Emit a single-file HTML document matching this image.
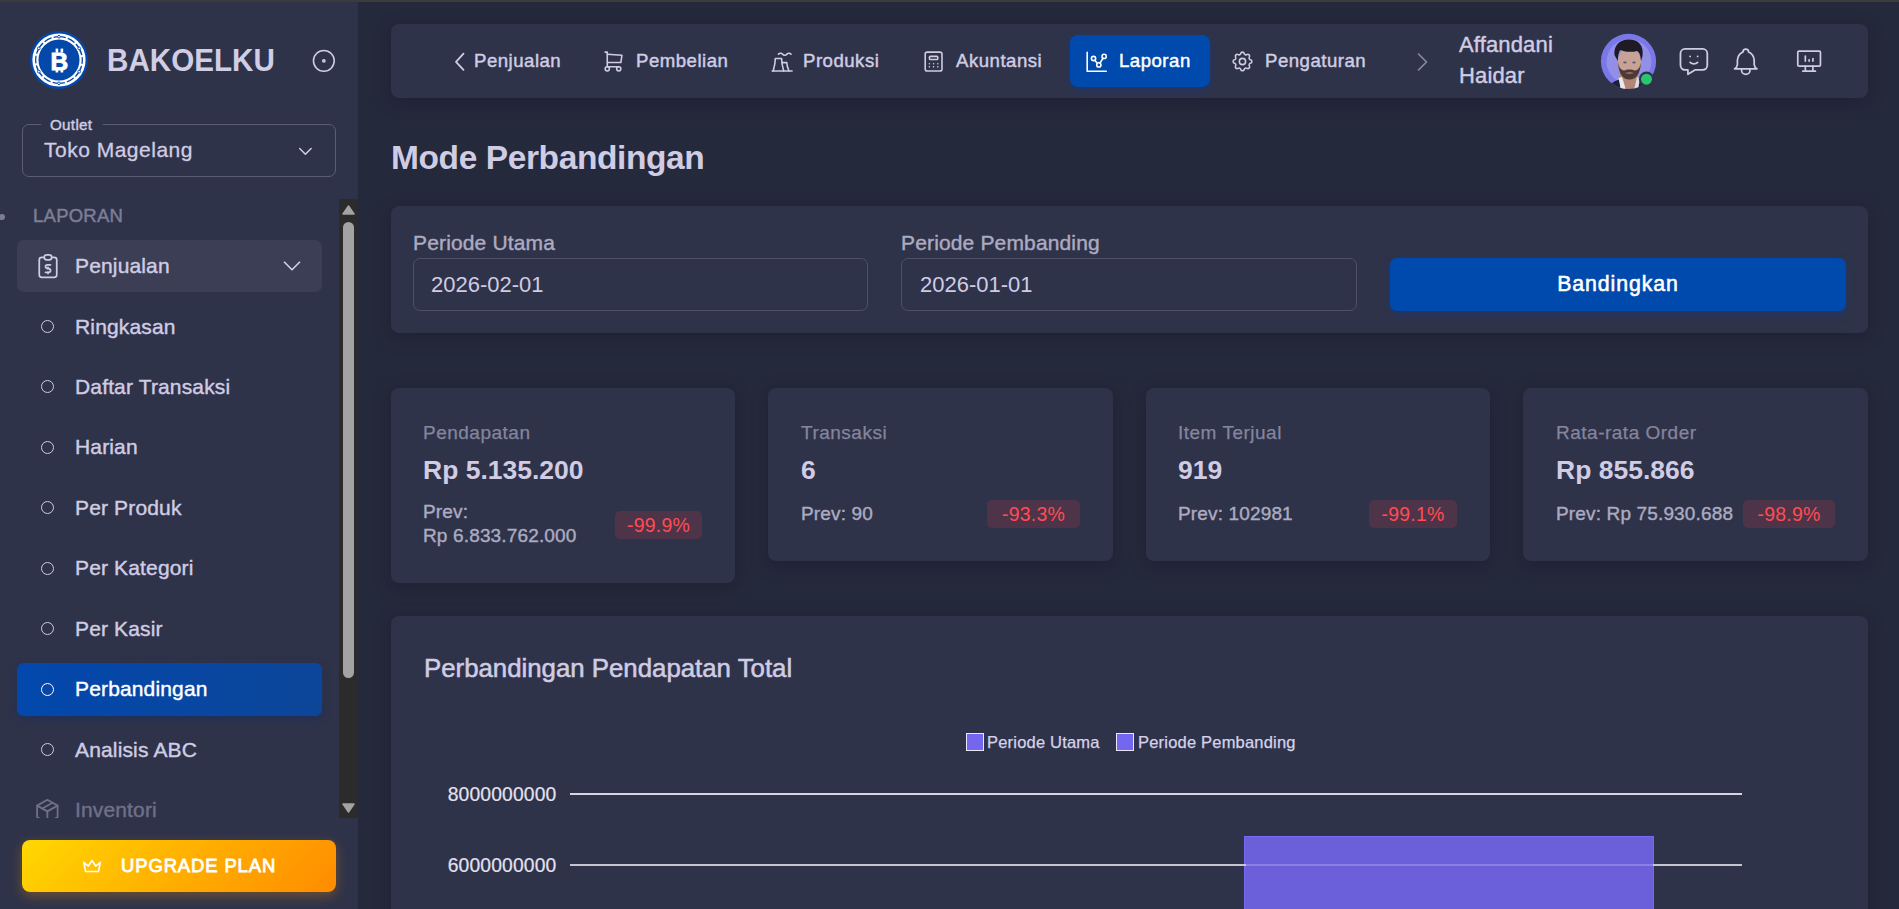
<!DOCTYPE html>
<html><head><meta charset="utf-8">
<style>
*{box-sizing:border-box;margin:0;padding:0}
html,body{width:1899px;height:909px;overflow:hidden;background:#25293c;font-family:"Liberation Sans",sans-serif;color:#cfcce4}
.a{position:absolute}
.t{position:absolute;line-height:1;white-space:nowrap}
#topline{left:0;top:0;width:1899px;height:2px;background:#3c3c3c}
#side{left:0;top:2px;width:358px;height:907px;background:#2f3349}
.card{position:absolute;background:#2f3349;border-radius:8px;box-shadow:0 4px 18px rgba(12,15,28,.28)}
svg{position:absolute;overflow:visible}
.sb{-webkit-text-stroke:0.4px currentColor;letter-spacing:0.15px}
.nv{font-weight:400 !important;-webkit-text-stroke:0.45px currentColor}
.bdg{background:#4d3449;border-radius:5px}
</style></head><body>
<div id="topline" class="a"></div>
<div id="side" class="a"></div>

<!-- logo -->
<svg style="left:29.5px;top:31.3px" width="58" height="58" viewBox="0 0 58 58">
  <circle cx="29" cy="29" r="29" fill="#0449aa"/>
  <circle cx="29" cy="29" r="23.55" fill="none" stroke="#fff" stroke-width="6.1"/>
  <circle cx="29" cy="29" r="23.3" fill="none" stroke="#0a4aa8" stroke-width="1.3" stroke-dasharray="12.4 2.1 7.8 2.1" stroke-dashoffset="-6"/>
  <circle cx="49.18" cy="40.65" r="1.35" fill="#fff" stroke="#0a4aa8" stroke-width="0.9"/><circle cx="29.00" cy="52.30" r="1.35" fill="#fff" stroke="#0a4aa8" stroke-width="0.9"/><circle cx="8.82" cy="40.65" r="1.35" fill="#fff" stroke="#0a4aa8" stroke-width="0.9"/><circle cx="8.82" cy="17.35" r="1.35" fill="#fff" stroke="#0a4aa8" stroke-width="0.9"/><circle cx="29.00" cy="5.70" r="1.35" fill="#fff" stroke="#0a4aa8" stroke-width="0.9"/><circle cx="49.18" cy="17.35" r="1.35" fill="#fff" stroke="#0a4aa8" stroke-width="0.9"/>
  <text x="29.4" y="38.6" text-anchor="middle" font-family="Liberation Sans" font-weight="700" font-size="24.5" fill="#fff" stroke="#fff" stroke-width="0.9">B</text>
  <rect x="25.6" y="17.6" width="2.6" height="4" fill="#fff"/><rect x="30.6" y="17.6" width="2.6" height="4" fill="#fff"/>
  <rect x="25.6" y="37.5" width="2.6" height="4" fill="#fff"/><rect x="30.6" y="37.5" width="2.6" height="4" fill="#fff"/>
</svg>
<div class="t" style="left:107px;top:44.8px;font-size:31px;font-weight:700;color:#d0cde4;transform:scaleX(0.955);transform-origin:0 0">BAKOELKU</div>
<svg style="left:310.40px;top:46.90px" width="27.70" height="27.70" viewBox="0 0 24 24" fill="none" stroke="#cfcce4" stroke-width="1.35" stroke-linecap="round" stroke-linejoin="round"><path d="M12 12m-1 0a1 1 0 1 0 2 0a1 1 0 1 0 -2 0"/><path d="M12 12m-9 0a9 9 0 1 0 18 0a9 9 0 1 0 -18 0"/></svg>

<!-- outlet select -->
<div class="a" style="left:22px;top:124px;width:314px;height:53px;border:1px solid #5b5d75;border-radius:7px"></div>
<div class="a" style="left:41px;top:118px;width:62px;height:12px;background:#2f3349"></div>
<div class="t sb" style="left:50px;top:116.6px;font-size:15.2px;color:#cfcce4;letter-spacing:0.3px">Outlet</div>
<div class="t" style="left:44px;top:139.4px;font-size:21px;color:#cfcce4;letter-spacing:0.5px;-webkit-text-stroke:0.3px currentColor">Toko Magelang</div>
<svg style="left:293.60px;top:139.60px" width="22.80" height="22.80" viewBox="0 0 24 24" fill="none" stroke="#cfcce4" stroke-width="1.6" stroke-linecap="round" stroke-linejoin="round"><path d="M6 9l6 6l6 -6"/></svg>


<!-- sidebar nav -->
<div class="a" style="left:-1px;top:214px;width:6px;height:6px;border-radius:50%;background:#7c7d96"></div>
<div class="t" style="left:33px;top:207px;font-size:18.5px;color:#7d7e97;letter-spacing:0.25px;-webkit-text-stroke:0.45px currentColor">LAPORAN</div>
<div class="a" style="left:17px;top:240px;width:305px;height:52px;border-radius:7px;background:#3b3e55"></div>
<svg style="left:32.70px;top:251.20px" width="30.00" height="30.00" viewBox="0 0 24 24" fill="none" stroke="#cfcce4" stroke-width="1.4" stroke-linecap="round" stroke-linejoin="round"><path d="M9 5h-2a2 2 0 0 0 -2 2v12a2 2 0 0 0 2 2h10a2 2 0 0 0 2 -2v-12a2 2 0 0 0 -2 -2h-2"/><path d="M9 3m0 2a2 2 0 0 1 2 -2h2a2 2 0 0 1 2 2v0a2 2 0 0 1 -2 2h-2a2 2 0 0 1 -2 -2z"/><path d="M14 11h-2.5a1.5 1.5 0 0 0 0 3h1a1.5 1.5 0 0 1 0 3h-2.5"/><path d="M12 17v1m0 -5v1"/></svg>
<div class="t sb" style="left:75px;top:254.9px;font-size:21px;color:#cfcce4">Penjualan</div>
<svg style="left:277.20px;top:250.60px" width="30.00" height="30.00" viewBox="0 0 24 24" fill="none" stroke="#cfcce4" stroke-width="1.4" stroke-linecap="round" stroke-linejoin="round"><path d="M6 9l6 6l6 -6"/></svg>
<div class="a" style="left:40.9px;top:320.0px;width:13px;height:13px;border-radius:50%;border:1.3px solid #cfcce4"></div>
<div class="t sb" style="left:75px;top:315.5px;font-size:21px;color:#cfcce4">Ringkasan</div>
<div class="a" style="left:40.9px;top:380.4px;width:13px;height:13px;border-radius:50%;border:1.3px solid #cfcce4"></div>
<div class="t sb" style="left:75px;top:375.9px;font-size:21px;color:#cfcce4">Daftar Transaksi</div>
<div class="a" style="left:40.9px;top:440.9px;width:13px;height:13px;border-radius:50%;border:1.3px solid #cfcce4"></div>
<div class="t sb" style="left:75px;top:436.4px;font-size:21px;color:#cfcce4">Harian</div>
<div class="a" style="left:40.9px;top:501.4px;width:13px;height:13px;border-radius:50%;border:1.3px solid #cfcce4"></div>
<div class="t sb" style="left:75px;top:496.9px;font-size:21px;color:#cfcce4">Per Produk</div>
<div class="a" style="left:40.9px;top:561.8px;width:13px;height:13px;border-radius:50%;border:1.3px solid #cfcce4"></div>
<div class="t sb" style="left:75px;top:557.3px;font-size:21px;color:#cfcce4">Per Kategori</div>
<div class="a" style="left:40.9px;top:622.2px;width:13px;height:13px;border-radius:50%;border:1.3px solid #cfcce4"></div>
<div class="t sb" style="left:75px;top:617.8px;font-size:21px;color:#cfcce4">Per Kasir</div>
<div class="a" style="left:17px;top:662.7px;width:305px;height:53px;border-radius:7px;background:linear-gradient(90deg,#0348ad 0%,#0c4699 100%);box-shadow:0 3px 8px rgba(0,40,120,.35)"></div>
<div class="a" style="left:40.9px;top:682.7px;width:13px;height:13px;border-radius:50%;border:1.3px solid #ffffff"></div>
<div class="t sb" style="left:75px;top:678.2px;font-size:21px;color:#ffffff">Perbandingan</div>
<div class="a" style="left:40.9px;top:743.2px;width:13px;height:13px;border-radius:50%;border:1.3px solid #cfcce4"></div>
<div class="t sb" style="left:75px;top:738.7px;font-size:21px;color:#cfcce4">Analisis ABC</div>

<div class="a" style="left:0;top:199px;width:339px;height:619px;overflow:hidden"><svg style="left:32.40px;top:596.70px" width="30.72" height="30.72" viewBox="0 0 24 24" fill="none" stroke="#6f7089" stroke-width="1.4" stroke-linecap="round" stroke-linejoin="round"><path d="M12 3l8 4.5l0 9l-8 4.5l-8 -4.5l0 -9l8 -4.5"/><path d="M12 12l8 -4.5"/><path d="M12 12l0 9"/><path d="M12 12l-8 -4.5"/><path d="M16 5.25l-8 4.5"/></svg></div>
<div class="t sb" style="left:75px;top:799px;font-size:21px;color:#6f7089">Inventori</div>
<!-- scrollbar -->
<div class="a" style="left:339px;top:199px;width:19px;height:619px;background:#2b2b2b"></div>
<svg style="left:342px;top:205px" width="13" height="10" viewBox="0 0 13 10"><path d="M6.5 1 L12 9 H1 Z" fill="#a3a3a3" stroke="#a3a3a3" stroke-width="1.5" stroke-linejoin="round"/></svg>
<div class="a" style="left:343px;top:222px;width:11px;height:456px;border-radius:6px;background:#a3a3a3"></div>
<svg style="left:342px;top:803px" width="13" height="10" viewBox="0 0 13 10"><path d="M6.5 9 L12 1 H1 Z" fill="#a3a3a3" stroke="#a3a3a3" stroke-width="1.5" stroke-linejoin="round"/></svg>
<!-- upgrade -->
<div class="a" style="left:22px;top:840px;width:314px;height:52px;border-radius:8px;background:linear-gradient(135deg,#ffd800 0%,#ffb000 50%,#ff8c00 100%);box-shadow:0 4px 12px rgba(255,150,0,.3)"></div>
<svg style="left:80.90px;top:855.20px" width="22.08" height="22.08" viewBox="0 0 24 24" fill="none" stroke="#fff" stroke-width="1.75" stroke-linecap="round" stroke-linejoin="round"><path d="M12 6l4 6l5 -4l-2 10h-14l-2 -10l5 4z"/></svg>
<div class="t" style="left:121px;top:857px;font-size:18.5px;color:#fff;letter-spacing:0.85px;-webkit-text-stroke:0.8px currentColor">UPGRADE PLAN</div>


<!-- top nav -->
<div class="card" style="left:391px;top:24px;width:1477px;height:74px"></div>
<svg style="left:454px;top:53px" width="11" height="18" viewBox="0 0 11 18"><path d="M9.5 0.6 L2 8.8 L9.5 16.9" fill="none" stroke="#cfcce4" stroke-width="1.8" stroke-linecap="round" stroke-linejoin="round"/></svg>
<div class="t nv" style="left:474px;top:52px;font-size:18.6px;font-weight:700;letter-spacing:0.5px;color:#cfcce4">Penjualan</div>
<svg style="left:600.60px;top:48.60px" width="25.08" height="25.08" viewBox="0 0 24 24" fill="none" stroke="#cfcce4" stroke-width="1.5" stroke-linecap="round" stroke-linejoin="round"><path d="M6 19m-2 0a2 2 0 1 0 4 0a2 2 0 1 0 -4 0"/><path d="M17 19m-2 0a2 2 0 1 0 4 0a2 2 0 1 0 -4 0"/><path d="M17 17h-11v-14h-2"/><path d="M6 5l14 1l-1 7h-13"/></svg>
<div class="t nv" style="left:636px;top:52px;font-size:18.6px;font-weight:700;letter-spacing:0.5px;color:#cfcce4">Pembelian</div>
<svg style="left:769.20px;top:48.60px" width="25.20" height="25.20" viewBox="0 0 24 24" fill="none" stroke="#cfcce4" stroke-width="1.5" stroke-linecap="round" stroke-linejoin="round"><path d="M4 21c1.147 -4.02 1.983 -8.027 2 -12h6c.017 3.973 .853 7.98 2 12"/><path d="M12.5 13h4.5c.025 2.612 .894 5.296 2 8"/><path d="M9 5a2.4 2.4 0 0 1 2 -1a2.4 2.4 0 0 1 2 1a2.4 2.4 0 0 0 2 1a2.4 2.4 0 0 0 2 -1a2.4 2.4 0 0 1 2 -1a2.4 2.4 0 0 1 2 1"/><path d="M3 21l19 0"/></svg>
<div class="t nv" style="left:803px;top:52px;font-size:18.6px;font-weight:700;letter-spacing:0.5px;color:#cfcce4">Produksi</div>
<svg style="left:920.60px;top:48.60px" width="25.20" height="25.20" viewBox="0 0 24 24" fill="none" stroke="#cfcce4" stroke-width="1.5" stroke-linecap="round" stroke-linejoin="round"><path d="M4 3m0 2a2 2 0 0 1 2 -2h12a2 2 0 0 1 2 2v14a2 2 0 0 1 -2 2h-12a2 2 0 0 1 -2 -2z"/><path d="M8 7m0 1a1 1 0 0 1 1 -1h6a1 1 0 0 1 1 1v1a1 1 0 0 1 -1 1h-6a1 1 0 0 1 -1 -1z"/><path d="M8 14l0 .01"/><path d="M12 14l0 .01"/><path d="M16 14l0 .01"/><path d="M8 17l0 .01"/><path d="M12 17l0 .01"/><path d="M16 17l0 .01"/></svg>
<div class="t nv" style="left:956px;top:52px;font-size:18.6px;font-weight:700;letter-spacing:0.5px;color:#cfcce4">Akuntansi</div>
<div class="a" style="left:1070px;top:35px;width:140px;height:52px;border-radius:8px;background:#004aad;box-shadow:0 3px 9px rgba(0,60,170,.35)"></div>
<svg style="left:1083.80px;top:48.70px" width="25.44" height="25.44" viewBox="0 0 24 24" fill="none" stroke="#fff" stroke-width="1.5" stroke-linecap="round" stroke-linejoin="round"><path d="M3 3v18h18"/><path d="M9 9m-2 0a2 2 0 1 0 4 0a2 2 0 1 0 -4 0"/><path d="M19 7m-2 0a2 2 0 1 0 4 0a2 2 0 1 0 -4 0"/><path d="M14 15m-2 0a2 2 0 1 0 4 0a2 2 0 1 0 -4 0"/><path d="M10.16 10.62l2.34 2.88"/><path d="M15.088 13.328l2.837 -4.586"/></svg>
<div class="t nv" style="left:1119px;top:52px;font-size:18.6px;font-weight:700;letter-spacing:0.5px;color:#fff">Laporan</div>
<svg style="left:1229.70px;top:49.30px" width="24.96" height="24.96" viewBox="0 0 24 24" fill="none" stroke="#cfcce4" stroke-width="1.5" stroke-linecap="round" stroke-linejoin="round"><path d="M10.325 4.317c.426 -1.756 2.924 -1.756 3.35 0a1.724 1.724 0 0 0 2.573 1.066c1.543 -.94 3.31 .826 2.37 2.37a1.724 1.724 0 0 0 1.065 2.572c1.756 .426 1.756 2.924 0 3.35a1.724 1.724 0 0 0 -1.066 2.573c.94 1.543 -.826 3.31 -2.37 2.37a1.724 1.724 0 0 0 -2.572 1.065c-.426 1.756 -2.924 1.756 -3.35 0a1.724 1.724 0 0 0 -2.573 -1.066c-1.543 .94 -3.31 -.826 -2.37 -2.37a1.724 1.724 0 0 0 -1.065 -2.572c-1.756 -.426 -1.756 -2.924 0 -3.35a1.724 1.724 0 0 0 1.066 -2.573c-.94 -1.543 .826 -3.31 2.37 -2.37c1 .608 2.296 .07 2.572 -1.065z"/><path d="M9 12a3 3 0 1 0 6 0a3 3 0 0 0 -6 0"/></svg>
<div class="t nv" style="left:1265px;top:52px;font-size:18.6px;font-weight:700;letter-spacing:0.5px;color:#cfcce4">Pengaturan</div>
<svg style="left:1417px;top:53px" width="11" height="18" viewBox="0 0 11 18"><path d="M1.5 1 L9.5 9 L1.5 17" fill="none" stroke="#8a8aa3" stroke-width="1.6" stroke-linecap="round" stroke-linejoin="round"/></svg>
<div class="t sb" style="left:1459px;top:33.5px;font-size:22px;color:#cfcce4">Affandani</div>
<div class="t sb" style="left:1459px;top:65px;font-size:22px;color:#cfcce4">Haidar</div>
<!-- avatar -->
<svg style="left:1601px;top:34px" width="56" height="56" viewBox="0 0 56 56">
  <defs><clipPath id="av"><circle cx="27.5" cy="27.4" r="27.6"/></clipPath></defs>
  <g clip-path="url(#av)">
    <rect x="-2" y="-2" width="60" height="60" fill="#7a77e8"/>
    <circle cx="28" cy="27.5" r="22.5" fill="#918fe7"/>
    <path d="M6 56 C8 50 13 47 20 45 L36 45 C42 47 46 50 48 56 Z" fill="#1c2236"/>
    <path d="M19 38 H36 V56 H19 Z" fill="#b38677"/>
    <path d="M17.5 44 L21 43 L25 56 H20 Z" fill="#e9e9ef"/>
    <path d="M36 43 L39 45 L37 56 H33 Z" fill="#dcdde3"/>
    <ellipse cx="28.5" cy="29" rx="11.6" ry="15.5" fill="#c8a197"/>
    <path d="M17 28 C17.5 40 22 45.5 28.5 45.5 C35 45.5 39.5 40 40 28 C39 34 37 36 34 36.5 C31 35 26 35 23 36.5 C20 36 18 34 17 28 Z" fill="#4d3a35"/>
    <path d="M24 39 C26 38 31 38 33 39 C31 40 26 40 24 39 Z" fill="#a47a70"/>
    <path d="M13.5 21 C12.5 12 18 5.5 28 5.5 C37 5.5 43 11 41.5 22 L40 27 C39.5 21 38.5 18 36 17 C31 18.5 24 18 19.5 16 C17.5 18 17 22 16.8 27 Z" fill="#1e1c22"/>
    <ellipse cx="24" cy="28.5" rx="1.8" ry="0.9" fill="#5d5f70"/><ellipse cx="33" cy="28.5" rx="1.8" ry="0.9" fill="#5d5f70"/>
  </g>
  <circle cx="45.5" cy="45.2" r="7.6" fill="#2f3349"/>
  <circle cx="45.5" cy="45.2" r="5.45" fill="#28c76f"/>
</svg>
<svg style="left:1675.60px;top:43.20px" width="35.76" height="35.76" viewBox="0 0 24 24" fill="none" stroke="#cfcce4" stroke-width="1.2" stroke-linecap="round" stroke-linejoin="round"><path d="M18 4a3 3 0 0 1 3 3v8a3 3 0 0 1 -3 3h-5l-5 3v-3h-2a3 3 0 0 1 -3 -3v-8a3 3 0 0 1 3 -3h12z"/><path d="M9.5 9h.01"/><path d="M14.5 9h.01"/><path d="M9.5 13a3.5 3.5 0 0 0 5 0"/></svg>
<svg style="left:1728.50px;top:44.85px" width="33.60" height="33.60" viewBox="0 0 24 24" fill="none" stroke="#cfcce4" stroke-width="1.25" stroke-linecap="round" stroke-linejoin="round"><path d="M10 5a2 2 0 1 1 4 0a7 7 0 0 1 4 6v3a4 4 0 0 0 2 3h-16a4 4 0 0 0 2 -3v-3a7 7 0 0 1 4 -6"/><path d="M9 17v1a3 3 0 0 0 6 0v-1"/></svg>
<svg style="left:1793.90px;top:45.90px" width="30.24" height="30.24" viewBox="0 0 24 24" fill="none" stroke="#cfcce4" stroke-width="1.35" stroke-linecap="round" stroke-linejoin="round"><path d="M3 4m0 1a1 1 0 0 1 1 -1h16a1 1 0 0 1 1 1v10a1 1 0 0 1 -1 1h-16a1 1 0 0 1 -1 -1z"/><path d="M7 20h10"/><path d="M9 16v4"/><path d="M15 16v4"/><path d="M9 12v-4"/><path d="M12 12v-1"/><path d="M15 12v-2"/></svg>

<!-- page title -->
<div class="t" style="left:391px;top:140.5px;font-size:33.5px;font-weight:700;color:#cfcce4;letter-spacing:-0.4px">Mode Perbandingan</div>

<!-- filter card -->
<div class="card" style="left:391px;top:206px;width:1477px;height:127px"></div>
<div class="t sb" style="left:413px;top:232px;font-size:21px;color:#acabc1">Periode Utama</div>
<div class="a" style="left:413px;top:258px;width:455px;height:53px;border:1px solid #4d5068;border-radius:7px"></div>
<div class="t" style="left:431px;top:273.5px;font-size:22px;color:#cfcce4">2026-02-01</div>
<div class="t sb" style="left:901px;top:232px;font-size:21px;color:#acabc1">Periode Pembanding</div>
<div class="a" style="left:901px;top:258px;width:456px;height:53px;border:1px solid #4d5068;border-radius:7px"></div>
<div class="t" style="left:920px;top:273.5px;font-size:22px;color:#cfcce4">2026-01-01</div>
<div class="a" style="left:1390px;top:258px;width:456px;height:53px;border-radius:7px;background:#004aad;box-shadow:0 3px 9px rgba(0,60,170,.35)"></div>
<div class="t" style="left:1390px;width:456px;text-align:center;top:274px;font-size:21.3px;color:#fff;letter-spacing:0.9px;-webkit-text-stroke:0.55px currentColor">Bandingkan</div>


<!-- stat cards -->
<div class="card" style="left:391px;top:388px;width:344px;height:195px"></div>
<div class="card" style="left:768px;top:388px;width:345px;height:173px"></div>
<div class="card" style="left:1146px;top:388px;width:344px;height:173px"></div>
<div class="card" style="left:1523px;top:388px;width:345px;height:173px"></div>

<div class="t" style="left:423px;top:422.5px;font-size:19px;color:#85859e;letter-spacing:0.5px;-webkit-text-stroke:0.25px currentColor">Pendapatan</div>
<div class="t" style="left:423px;top:456.5px;font-size:26.5px;font-weight:700;color:#cfcce4">Rp 5.135.200</div>
<div class="t sb" style="left:423px;top:502px;font-size:19px;color:#acabc1">Prev:</div>
<div class="t sb" style="left:423px;top:526px;font-size:19px;color:#acabc1">Rp 6.833.762.000</div>
<div class="a bdg" style="left:615px;top:511px;width:87px;height:28px"></div>
<div class="t" style="left:615px;width:87px;text-align:center;top:515.5px;font-size:19.5px;color:#ff4c51;letter-spacing:0.2px">-99.9%</div>

<div class="t" style="left:801px;top:422.5px;font-size:19px;color:#85859e;letter-spacing:0.5px;-webkit-text-stroke:0.25px currentColor">Transaksi</div>
<div class="t" style="left:801px;top:456.5px;font-size:26.5px;font-weight:700;color:#cfcce4">6</div>
<div class="t sb" style="left:801px;top:503.8px;font-size:19px;color:#acabc1">Prev: 90</div>
<div class="a bdg" style="left:987px;top:500px;width:93px;height:28px"></div>
<div class="t" style="left:987px;width:93px;text-align:center;top:504.5px;font-size:19.5px;color:#ff4c51;letter-spacing:0.2px">-93.3%</div>

<div class="t" style="left:1178px;top:422.5px;font-size:19px;color:#85859e;letter-spacing:0.5px;-webkit-text-stroke:0.25px currentColor">Item Terjual</div>
<div class="t" style="left:1178px;top:456.5px;font-size:26.5px;font-weight:700;color:#cfcce4">919</div>
<div class="t sb" style="left:1178px;top:503.8px;font-size:19px;color:#acabc1">Prev: 102981</div>
<div class="a bdg" style="left:1369px;top:500px;width:88px;height:28px"></div>
<div class="t" style="left:1369px;width:88px;text-align:center;top:504.5px;font-size:19.5px;color:#ff4c51;letter-spacing:0.2px">-99.1%</div>

<div class="t" style="left:1556px;top:422.5px;font-size:19px;color:#85859e;letter-spacing:0.5px;-webkit-text-stroke:0.25px currentColor">Rata-rata Order</div>
<div class="t" style="left:1556px;top:456.5px;font-size:26.5px;font-weight:700;color:#cfcce4">Rp 855.866</div>
<div class="t sb" style="left:1556px;top:503.8px;font-size:19px;color:#acabc1">Prev: Rp 75.930.688</div>
<div class="a bdg" style="left:1743px;top:500px;width:92px;height:28px"></div>
<div class="t" style="left:1743px;width:92px;text-align:center;top:504.5px;font-size:19.5px;color:#ff4c51;letter-spacing:0.2px">-98.9%</div>

<!-- chart card -->
<div class="card" style="left:391px;top:616px;width:1477px;height:320px"></div>
<div class="t sb" style="left:424px;top:656.2px;font-size:25.8px;color:#cfcce4;letter-spacing:0px;-webkit-text-stroke:0.55px currentColor">Perbandingan Pendapatan Total</div>
<div class="a" style="left:965.5px;top:733px;width:18px;height:18px;background:#7367f0;border:1.5px solid #e8e6f8"></div>
<div class="t" style="left:987px;top:734px;font-size:16.5px;color:#d5d3ea;letter-spacing:0.2px;-webkit-text-stroke:0.25px currentColor">Periode Utama</div>
<div class="a" style="left:1115.5px;top:733px;width:18px;height:18px;background:#7367f0;border:1.5px solid #e8e6f8"></div>
<div class="t" style="left:1138px;top:734px;font-size:16.5px;color:#d5d3ea;letter-spacing:0.2px;-webkit-text-stroke:0.25px currentColor">Periode Pembanding</div>
<div class="t" style="left:447.7px;top:784.5px;font-size:19.3px;color:#e3e1f0;letter-spacing:0.15px;-webkit-text-stroke:0.2px currentColor">8000000000</div>
<div class="t" style="left:447.7px;top:856px;font-size:19.3px;color:#e3e1f0;letter-spacing:0.15px;-webkit-text-stroke:0.2px currentColor">6000000000</div>
<div class="a" style="left:570px;top:793px;width:1172px;height:1.5px;background:#d6d5e0"></div>
<div class="a" style="left:1244px;top:835.5px;width:410px;height:80px;background:#6b60da;border:1.5px solid #7669f5;border-bottom:none"></div>
<div class="a" style="left:570px;top:864px;width:1172px;height:1.5px;background:#d6d5e0;opacity:.9"></div>
<div class="a" style="left:1245.5px;top:864px;width:407px;height:1.5px;background:#8a80e6"></div>

</body></html>
